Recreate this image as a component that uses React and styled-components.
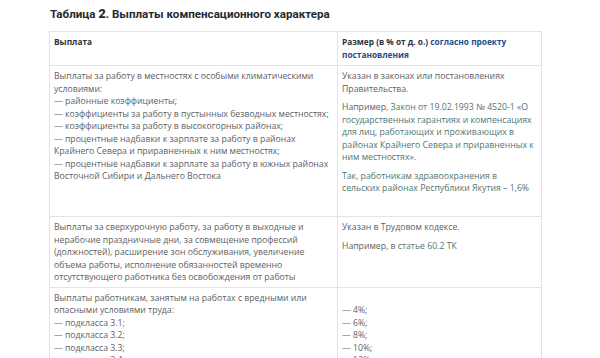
import React from 'react';
import styled, { createGlobalStyle } from 'styled-components';

const GlobalStyle = createGlobalStyle`
  body {
    margin: 0;
    background: #ffffff;
    font-family: 'Open Sans', 'Liberation Sans', sans-serif;
  }
`;

const Page = styled.div`
  padding: 6px 0 0 49px;
  width: 492px;
`;

const Title = styled.h3`
  margin: 0 0 9px 1px;
  font-family: Roboto, 'Liberation Sans', sans-serif;
  font-size: 11.6px;
  line-height: 16px;
  font-weight: 700;
  color: #262a2e;
`;

const TitleNumber = styled.span`
  font-size: 12.5px;
  font-weight: 900;
`;

const Table = styled.table`
  width: 492px;
  border-collapse: collapse;
  table-layout: fixed;
`;

const Col = styled.col`
  width: ${(p) => p.$width}px;
`;

const HeadCell = styled.th`
  border: 1px solid #dfe4ea;
  padding: 4px 4px 4px;
  text-align: left;
  vertical-align: top;
  white-space: nowrap;
  font-size: 8.3px;
  line-height: 12.5px;
  font-weight: 700;
  color: #2f3337;
`;

const Cell = styled.td`
  border: 1px solid #dfe4ea;
  padding: 4px 4px 3px;
  vertical-align: top;
  white-space: nowrap;
  font-size: 8.7px;
  line-height: 12.5px;
  color: #5d6064;
`;

const Para = styled.p`
  margin: 0 0 6px;

  &:last-child {
    margin-bottom: 0;
  }
`;

const HeadLink = styled.a`
  color: #234c8c;
  text-decoration: none;
`;

const DocLink = styled.a`
  color: #4d7672;
  text-decoration: none;
`;

const App = () => {
  return (
    <Page>
      <GlobalStyle />
      <Title>
        Таблица <TitleNumber>2</TitleNumber>. Выплаты компенсационного характера
      </Title>

      <Table>
        <colgroup>
          <Col $width={288} />
          <Col $width={204} />
        </colgroup>
        <thead>
          <tr>
            <HeadCell>Выплата</HeadCell>
            <HeadCell>
              Размер (в % от д. о.) <HeadLink href="#">согласно проекту
              <br />постановления</HeadLink>
            </HeadCell>
          </tr>
        </thead>
        <tbody>
          <tr>
            <Cell>
              <Para>
                Выплаты за работу в местностях с особыми климатическими
                <br />условиями:
                <br />— районные коэффициенты;
                <br />— коэффициенты за работу в пустынных безводных местностях;
                <br />— коэффициенты за работу в высокогорных районах;
                <br />— процентные надбавки к зарплате за работу в районах
                <br />Крайнего Севера и приравненных к ним местностях;
                <br />— процентные надбавки к зарплате за работу в южных районах
                <br />Восточной Сибири и Дальнего Востока
              </Para>
            </Cell>
            <Cell>
              <Para>
                Указан в законах или постановлениях
                <br />Правительства.
              </Para>
              <Para>
                Например, <DocLink href="#">Закон от 19.02.1993 № 4520-1 «О
                <br />государственных гарантиях и компенсациях
                <br />для лиц, работающих и проживающих в
                <br />районах Крайнего Севера и приравненных к
                <br />ним местностях»</DocLink>.
              </Para>
              <Para>
                <DocLink href="#">Так, работникам здравоохранения в
                <br />сельских районах Республики Якутия – 1,6%</DocLink>
              </Para>
              <Para>&nbsp;</Para>
            </Cell>
          </tr>
          <tr>
            <Cell>
              <Para>
                Выплаты за сверхурочную работу, за работу в выходные и
                <br />нерабочие праздничные дни, за совмещение профессий
                <br />(должностей), расширение зон обслуживания, увеличение
                <br />объема работы, исполнение обязанностей временно
                <br />отсутствующего работника без освобождения от работы
              </Para>
            </Cell>
            <Cell>
              <Para>Указан в Трудовом кодексе.</Para>
              <Para>
                Например, в <DocLink href="#">статье 60.2 ТК</DocLink>
              </Para>
            </Cell>
          </tr>
          <tr>
            <Cell>
              <Para>
                Выплаты работникам, занятым на работах с вредными или
                <br />опасными условиями труда:
                <br />— подкласса 3.1;
                <br />— подкласса 3.2;
                <br />— подкласса 3.3;
                <br />— подкласса 3.4;
                <br />— класса 4
              </Para>
            </Cell>
            <Cell>
              <Para>
                &nbsp;
                <br />— 4%;
                <br />— 6%;
                <br />— 8%;
                <br />— 10%;
                <br />— 12%;
                <br />— 24%
              </Para>
            </Cell>
          </tr>
        </tbody>
      </Table>
    </Page>
  );
};

export default App;
